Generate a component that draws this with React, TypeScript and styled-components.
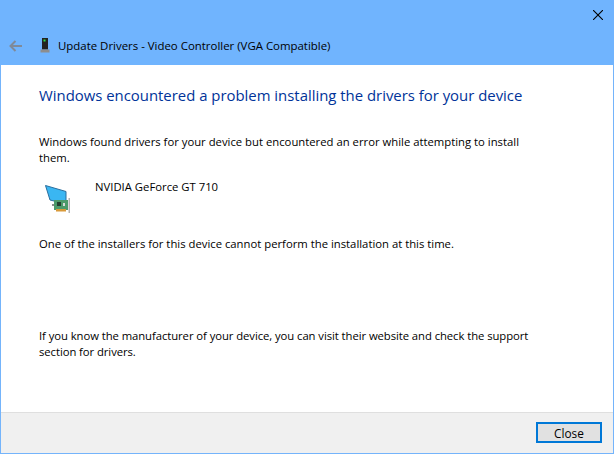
import React from "react";
import styled, { createGlobalStyle } from "styled-components";

const GlobalStyle = createGlobalStyle`
  html, body {
    margin: 0;
    padding: 0;
    background: #ffffff;
  }
`;

const Window = styled.div`
  width: 614px;
  height: 454px;
  box-sizing: border-box;
  display: flex;
  flex-direction: column;
  border: 1px solid #74b4fb;
  border-top: none;
  background: #ffffff;
  font-family: "Open Sans", "Noto Sans", sans-serif;
  font-size: 11.3px;
  color: #000000;
`;

const Header = styled.div`
  height: 65px;
  background: #70b4fe;
  display: flex;
  flex-direction: column;
  margin: 0 -1px;
`;

const CloseRow = styled.div`
  height: 30px;
  display: flex;
  justify-content: flex-end;
  padding: 10px 11px 0 0;
  box-sizing: border-box;
`;

const TitleRow = styled.div`
  height: 35px;
  display: flex;
  align-items: center;
  padding-left: 9px;
  padding-bottom: 4px;
  box-sizing: border-box;
`;

const TitleIcon = styled.svg`
  margin-left: 18px;
  margin-right: 8px;
`;

const TitleText = styled.div`
  font-size: 11.43px;
`;

const Content = styled.div`
  flex: 1;
  padding: 19px 38px 0;
  display: flex;
  flex-direction: column;
`;

const Heading = styled.div`
  font-size: 14.9px;
  line-height: 22px;
  color: #003399;
  margin-bottom: 28px;
`;

const Paragraph = styled.div<{ $after: number; $track?: number }>`
  line-height: 16px;
  margin-bottom: ${(p) => p.$after}px;
  letter-spacing: ${(p) => p.$track ?? 0}px;
`;

const DeviceRow = styled.div`
  display: flex;
  align-items: flex-start;
  height: 38px;
  margin-top: 13px;
  margin-bottom: 19px;
`;

const DeviceIcon = styled.svg`
  margin: 5px 13px 0 5px;
  flex-shrink: 0;
`;

const DeviceName = styled.div`
  line-height: 16px;
`;

const Footer = styled.div`
  height: 41px;
  box-sizing: border-box;
  background: #f0f0f0;
  border-top: 1px solid #dfdfdf;
  display: flex;
  justify-content: flex-end;
  align-items: flex-start;
  padding: 9px 11px 0 0;
`;

const CloseButton = styled.button`
  width: 66px;
  height: 21px;
  box-sizing: border-box;
  padding: 0;
  background: #e1e1e1;
  border: 2px solid #0078d7;
  font-family: inherit;
  font-size: 11.8px;
  color: #000000;
`;

function App() {
  return (
    <>
      <GlobalStyle />
      <Window>
        <Header>
          <CloseRow>
            <svg width="10" height="10" viewBox="0 0 10 10">
              <path d="M0 0 L10 10 M10 0 L0 10" stroke="#000" strokeWidth="1.1" fill="none" />
            </svg>
          </CloseRow>
          <TitleRow>
            <svg width="13" height="12" viewBox="0 0 13 12">
              <path d="M13 6 H2 M6.5 1 L1.5 6 L6.5 11" stroke="#7f8a99" strokeWidth="2" fill="none" />
            </svg>
            <TitleIcon width="10" height="15" viewBox="0 0 10 15">
              <rect x="2" y="0" width="6" height="11.5" fill="#222222" />
              <rect x="3.5" y="1.5" width="2" height="2" fill="#2fe04a" />
              <rect x="0.5" y="11.5" width="9" height="3" fill="#8d8d8d" />
            </TitleIcon>
            <TitleText>Update Drivers - Video Controller (VGA Compatible)</TitleText>
          </TitleRow>
        </Header>
        <Content>
          <Heading>Windows encountered a problem installing the drivers for your device</Heading>
          <Paragraph $after={0}>
            Windows found drivers for your device but encountered an error while attempting to install
            <br />
            them.
          </Paragraph>
          <DeviceRow>
            <DeviceIcon width="38" height="30" viewBox="0 0 38 30">
              <path d="M1.5 1.5 L22 7.5 V20 L6 16 Z" fill="#3ab6f2" stroke="#2b6f9e" strokeWidth="1" />
              <rect x="8" y="20" width="3" height="2" fill="#8a8a8a" />
              <rect x="10" y="16" width="14" height="10" fill="#4c9a6a" />
              <rect x="13" y="18" width="4" height="4" fill="#24402f" />
              <rect x="19" y="19" width="2" height="3" fill="#d8d8d8" />
              <rect x="12" y="25" width="10" height="2.5" fill="#d99a3a" />
              <rect x="24.5" y="14" width="1.5" height="15" fill="#b3b3b3" />
            </DeviceIcon>
            <DeviceName>NVIDIA GeForce GT 710</DeviceName>
          </DeviceRow>
          <Paragraph $after={76}>One of the installers for this device cannot perform the installation at this time.</Paragraph>
          <Paragraph $after={0} $track={-0.07}>
            If you know the manufacturer of your device, you can visit their website and check the support
            <br />
            section for drivers.
          </Paragraph>
        </Content>
        <Footer>
          <CloseButton>Close</CloseButton>
        </Footer>
      </Window>
    </>
  );
}

export default App;
